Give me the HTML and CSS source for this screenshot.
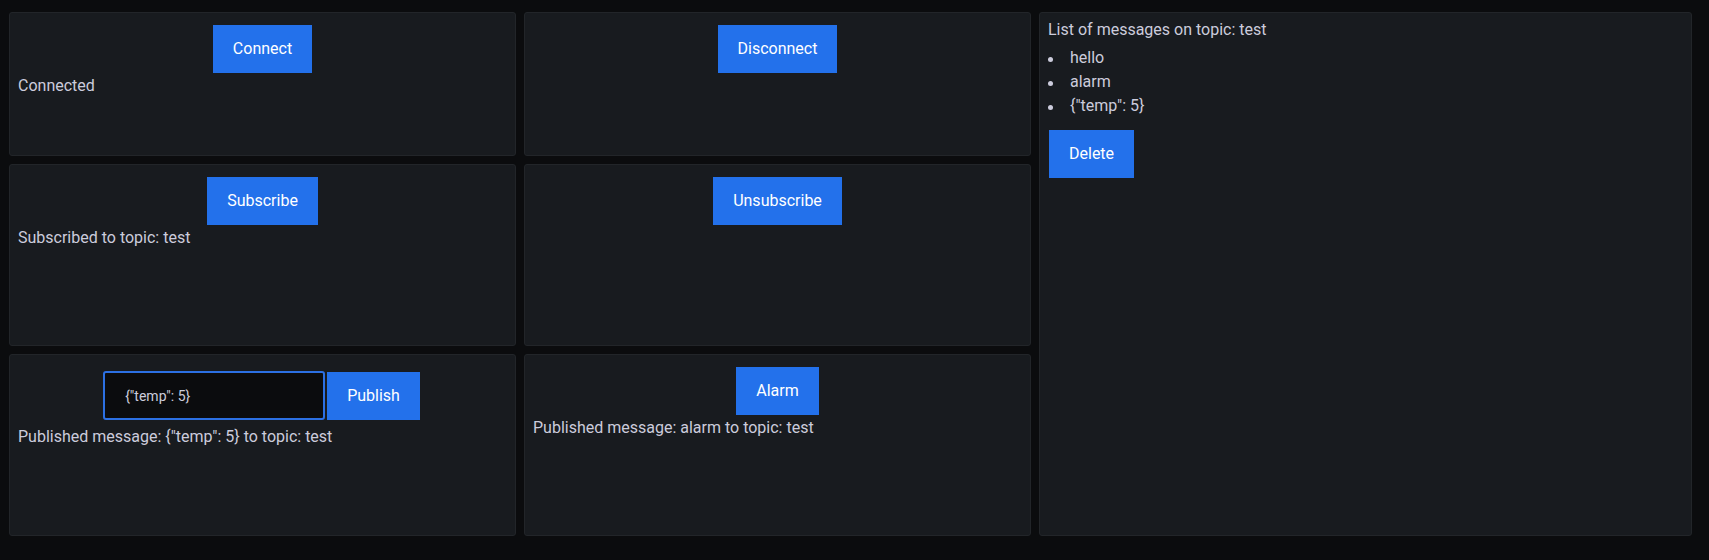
FILE: index.html
```html
<!DOCTYPE html>
<html lang="en">
<head>
<meta charset="utf-8">
<title>MQTT Dashboard</title>
<link rel="stylesheet" href="styles.css">
</head>
<body>
<div class="dashboard">
  <section class="panel p-connect">
    <div class="btn-row"><button class="btn">Connect</button></div>
    <div class="status">Connected</div>
  </section>
  <section class="panel p-disconnect">
    <div class="btn-row"><button class="btn">Disconnect</button></div>
  </section>
  <section class="panel p-list">
    <div class="list-title">List of messages on topic: test</div>
    <ul class="msg-list">
      <li>hello</li>
      <li>alarm</li>
      <li>{"temp": 5}</li>
    </ul>
    <button class="btn btn-delete">Delete</button>
  </section>
  <section class="panel p-subscribe">
    <div class="btn-row"><button class="btn">Subscribe</button></div>
    <div class="status">Subscribed to topic: test</div>
  </section>
  <section class="panel p-unsubscribe">
    <div class="btn-row"><button class="btn">Unsubscribe</button></div>
  </section>
  <section class="panel p-publish">
    <div class="publish-row">
      <input class="msg-input" type="text" value='{"temp": 5}'>
      <button class="btn">Publish</button>
    </div>
    <div class="status">Published message: {"temp": 5} to topic: test</div>
  </section>
  <section class="panel p-alarm">
    <div class="btn-row"><button class="btn">Alarm</button></div>
    <div class="status">Published message: alarm to topic: test</div>
  </section>
</div>
</body>
</html>
```

FILE: styles.css
```css
* {
  box-sizing: border-box;
}

html, body {
  margin: 0;
  padding: 0;
  background: #0b0c0e;
  height: 100%;
}

body {
  font-family: Roboto, "Liberation Sans", sans-serif;
  font-size: 16px;
  color: #ccccdc;
}

.dashboard {
  display: grid;
  grid-template-columns: 507px 507px 653px;
  grid-template-rows: 144px 182px 182px;
  column-gap: 8px;
  row-gap: 8px;
  padding: 12px 0 0 9px;
}

.panel {
  background: #181b1f;
  border: 1px solid #222529;
  border-radius: 3px;
  padding: 8px;
  overflow: hidden;
}

.p-connect { grid-column: 1; grid-row: 1; }
.p-disconnect { grid-column: 2; grid-row: 1; }
.p-list { grid-column: 3; grid-row: 1 / 4; }
.p-subscribe { grid-column: 1; grid-row: 2; }
.p-unsubscribe { grid-column: 2; grid-row: 2; }
.p-publish { grid-column: 1; grid-row: 3; }
.p-alarm { grid-column: 2; grid-row: 3; }

.btn-row {
  display: flex;
  justify-content: center;
  padding: 4px 0 1px;
}

.btn {
  display: inline-block;
  height: 48px;
  padding: 12px 20px;
  border: none;
  border-radius: 0;
  background: #2371eb;
  color: #ffffff;
  font-family: Roboto, "Liberation Sans", sans-serif;
  font-size: 16px;
  line-height: 24px;
  cursor: pointer;
}

.status {
  line-height: 24px;
}

.publish-row {
  display: flex;
  justify-content: center;
  align-items: flex-end;
  gap: 2px;
  padding: 8px 2px 5px 0;
}

.msg-input {
  width: 222px;
  height: 49px;
  padding: 0 20px;
  background: #0b0c0e;
  border: 2px solid #2c70e3;
  border-radius: 3px;
  color: #ccccdc;
  font-family: Roboto, "Liberation Sans", sans-serif;
  font-size: 14px;
  outline: none;
}

.list-title {
  line-height: 18px;
}

.msg-list {
  list-style: none;
  margin: 7px 0 12px;
  padding: 0;
}

.msg-list li {
  display: flex;
  align-items: center;
  line-height: 24px;
}

.msg-list li::before {
  content: "";
  flex: 0 0 5px;
  height: 5px;
  margin: 2px 17px 0 0;
  border-radius: 50%;
  background: #ccccdc;
}

.btn-delete {
  margin-left: 1px;
}
```
